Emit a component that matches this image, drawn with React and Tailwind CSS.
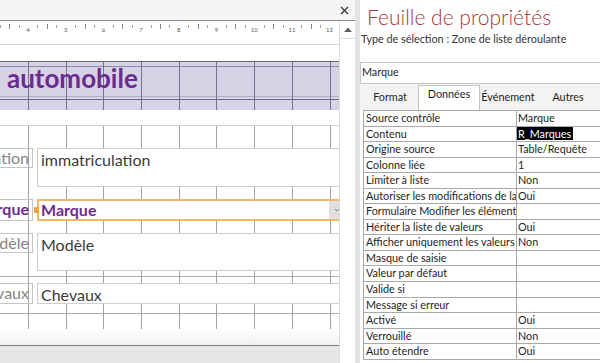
import React from 'react';

// major grid lines of the design surface (1 cm)
const COLS = [28, 66, 103, 141, 179, 216, 254, 292, 330];
const RULER_NUMS = [4, 5, 6, 7, 8, 9, 10, 11, 12];

const PROPS = [
  ['Source contrôle', 'Marque'],
  ['Contenu', 'R_Marques', true],
  ['Origine source', 'Table/Requête'],
  ['Colonne liée', '1'],
  ['Limiter à liste', 'Non'],
  ['Autoriser les modifications de la liste de valeurs', 'Oui'],
  ['Formulaire Modifier les éléments de liste', ''],
  ['Hériter la liste de valeurs', 'Oui'],
  ['Afficher uniquement les valeurs de la source', 'Non'],
  ['Masque de saisie', ''],
  ['Valeur par défaut', ''],
  ['Valide si', ''],
  ['Message si erreur', ''],
  ['Activé', 'Oui'],
  ['Verrouillé', 'Non'],
  ['Auto étendre', 'Oui'],
];

const Ruler = () => {
  const small = [];
  const tall = [];
  for (let k = -1; k < 9; k++) {
    const x0 = 28 + 37.7 * k;
    small.push(Math.round(x0 + 9.4) + 0.5, Math.round(x0 + 28.3) + 0.5);
    tall.push(Math.round(x0 + 18.85) + 0.5);
  }
  return (
    <svg width="339" height="23" className="block">
      {small.map((x, i) => (
        <line key={'s' + i} x1={x} x2={x} y1="4" y2="7" stroke="#a0a0a0" />
      ))}
      {tall.map((x, i) => (
        <line key={'t' + i} x1={x} x2={x} y1="3" y2="8" stroke="#8a8a8a" />
      ))}
      {RULER_NUMS.map((n, i) => (
        <text
          key={n}
          x={28 + 37.7 * i}
          y="10.5"
          fontSize="6"
          textAnchor="middle"
          fill="#555"
          fontFamily="Lato, sans-serif"
        >
          {n}
        </text>
      ))}
    </svg>
  );
};

// label attached to a control, right-aligned, cut by the left edge of the surface
const FieldLabel = ({ top, h, children, bold }) => (
  <div
    className={
      'absolute left-[-100px] w-[133px] border border-[#c4c4c4] pr-[3px] text-right leading-[18px] ' +
      (bold ? 'font-bold text-[#6c2b8f]' : 'text-[#858585]')
    }
    style={{ top, height: h }}
  >
    {children}
  </div>
);

const TextBox = ({ top, h, children }) => (
  <div
    className="absolute left-[37px] w-[320px] border border-[#cfcfcf] bg-white pl-[3px] pt-[1px] leading-[20px] text-[#3c3c3c]"
    style={{ top, height: h }}
  >
    {children}
  </div>
);

const DesignSurface = () => (
  <div className="flex flex-1 flex-col overflow-hidden bg-white font-['Lato',sans-serif] text-[16px]">
    <div className="h-[16px] shrink-0" />

    {/* en-tête de formulaire */}
    <div className="relative h-[49px] shrink-0 border-t border-[#6e6e6e] bg-[#d8d2e7]">
      <div className="absolute left-0 right-0 top-[4px] h-px bg-[#8b85a0]" />
      <div className="absolute left-0 right-0 top-[34px] h-px bg-[#b3adc6]" />
      <div className="absolute left-0 right-0 top-[37px] h-px bg-[#6f6984]" />
      {COLS.map((x) => (
        <div key={x} className="absolute bottom-0 top-0 w-px bg-[#77718c]" style={{ left: x }} />
      ))}
      <div className="absolute left-[7px] top-[3px] text-[26px] font-bold leading-[26px] text-[#6c2b8f]">
        automobile
      </div>
    </div>

    <div className="h-[15px] shrink-0" />

    {/* détail */}
    <div className="relative h-[204px] shrink-0 border-t border-[#d2d2d2] text-[16px]">
      {COLS.map((x) => (
        <div key={x} className="absolute bottom-0 top-0 w-px bg-[#a3a3a3]" style={{ left: x }} />
      ))}
      <div className="absolute left-0 right-0 top-[150px] h-px bg-[#ababab]" />
      <div className="absolute left-0 right-0 top-[187px] h-px bg-[#ababab]" />

      <FieldLabel top={22} h={20}>immatriculation</FieldLabel>
      <TextBox top={22} h={39}>immatriculation</TextBox>

      <FieldLabel top={73} h={22} bold>Marque</FieldLabel>
      <div className="absolute left-[37px] top-[73px] flex h-[22px] w-[320px] items-center border-2 border-[#f6b667] bg-white pl-[2px] font-bold text-[#6c2b8f]">
        Marque
      </div>
      <div className="absolute left-[329px] top-[75px] flex h-[18px] w-[12px] items-center justify-end bg-[#e0e0e0] pr-px">
        <svg width="6" height="4" viewBox="0 0 6 4">
          <path d="M1 1l2 2 2-2" fill="none" stroke="#666" strokeWidth="0.8" />
        </svg>
      </div>
      <div className="absolute left-[34px] top-[81px] h-[6px] w-[5px] bg-[#f3a23e]" />

      <FieldLabel top={107} h={20}>Modèle</FieldLabel>
      <TextBox top={107} h={38}>Modèle</TextBox>

      <FieldLabel top={157} h={21}>Chevaux</FieldLabel>
      <TextBox top={157} h={21}>Chevaux</TextBox>
    </div>

    <div className="flex-1 bg-linear-to-b from-white to-[#f1f1f1]" />
  </div>
);

const PropertySheet = () => (
  <div className="flex w-[240px] flex-col overflow-hidden bg-white font-['Lato',sans-serif] text-[10.8px] text-[#1e1e1e]">
    <div className="h-[32px] shrink-0 pl-[7px] pt-[4px] text-[21px] font-light leading-[26px] text-[#a4373a]">
      Feuille de propriétés
    </div>
    <div className="h-[14px] shrink-0 pl-px leading-[14px] text-[#333]">
      Type de sélection : Zone de liste déroulante
    </div>

    <div className="mt-[16px] h-[22px] shrink-0 border-y border-l border-[#c5c5c5] pl-px pt-[2px] leading-[14px]">
      Marque
    </div>

    <div className="flex h-[26px] shrink-0 bg-[#f3f3f3] pl-[2px]">
      <div className="w-[60px] pt-[6px] text-center leading-[14px]">Format</div>
      <div className="mt-px w-[66px] border-x border-t border-[#c5c5c5] bg-white pt-px text-center leading-[14px]">
        Données
      </div>
      <div className="w-[60px] pt-[6px] text-center leading-[14px]">Événement</div>
      <div className="w-[64px] shrink-0 pt-[6px] text-center leading-[14px]">Autres</div>
    </div>

    <div className="ml-[3px] border-l border-t border-[#a9a9a9]">
      {PROPS.map(([name, value, selected]) => (
        <div key={name} className="flex h-[15.55px] border-b border-[#a9a9a9]">
          <div className="w-[153px] shrink-0 overflow-hidden whitespace-nowrap border-r border-[#a9a9a9] pl-[2px] leading-[13px]">
            {name}
          </div>
          <div className="flex-1 whitespace-nowrap leading-[13px]">
            {selected ? (
              <span className="inline-block bg-black pl-px pr-[2px] text-white">{value}</span>
            ) : (
              <span className="pl-px">{value}</span>
            )}
          </div>
        </div>
      ))}
    </div>
  </div>
);

export default function App() {
  return (
    <div className="flex h-[363px] w-[600px] overflow-hidden bg-white">
      {/* volet de création du formulaire */}
      <div className="flex w-[355px] shrink-0 flex-col">
        <div className="flex h-[21px] shrink-0 items-center justify-end border-b border-[#8a8a8a] bg-[#f5f5f5] pr-[6px]">
          <svg width="9" height="9" viewBox="0 0 9 9">
            <path d="M1 1l7 7M8 1L1 8" stroke="#333" strokeWidth="1.2" />
          </svg>
        </div>
        <div className="flex min-h-0 flex-1">
          <div className="flex w-[339px] shrink-0 flex-col">
            <div className="h-[24px] shrink-0 border-b border-[#d6d6d6]">
              <Ruler />
            </div>
            <DesignSurface />
            <div className="h-[18px] shrink-0 border-t border-[#7a7a7a] bg-[#e6e6e6]" />
          </div>
          <div className="flex flex-1 flex-col border-l border-[#dedede] bg-white">
            <div className="flex h-[18px] items-center justify-center border-b border-[#dedede]">
              <svg width="8" height="5" viewBox="0 0 8 5">
                <path d="M0 5L4 0.5 8 5z" fill="#5f5f5f" />
              </svg>
            </div>
          </div>
        </div>
      </div>

      <div className="w-[5px] shrink-0 bg-[#e3e3e3]" />

      <PropertySheet />
    </div>
  );
}
